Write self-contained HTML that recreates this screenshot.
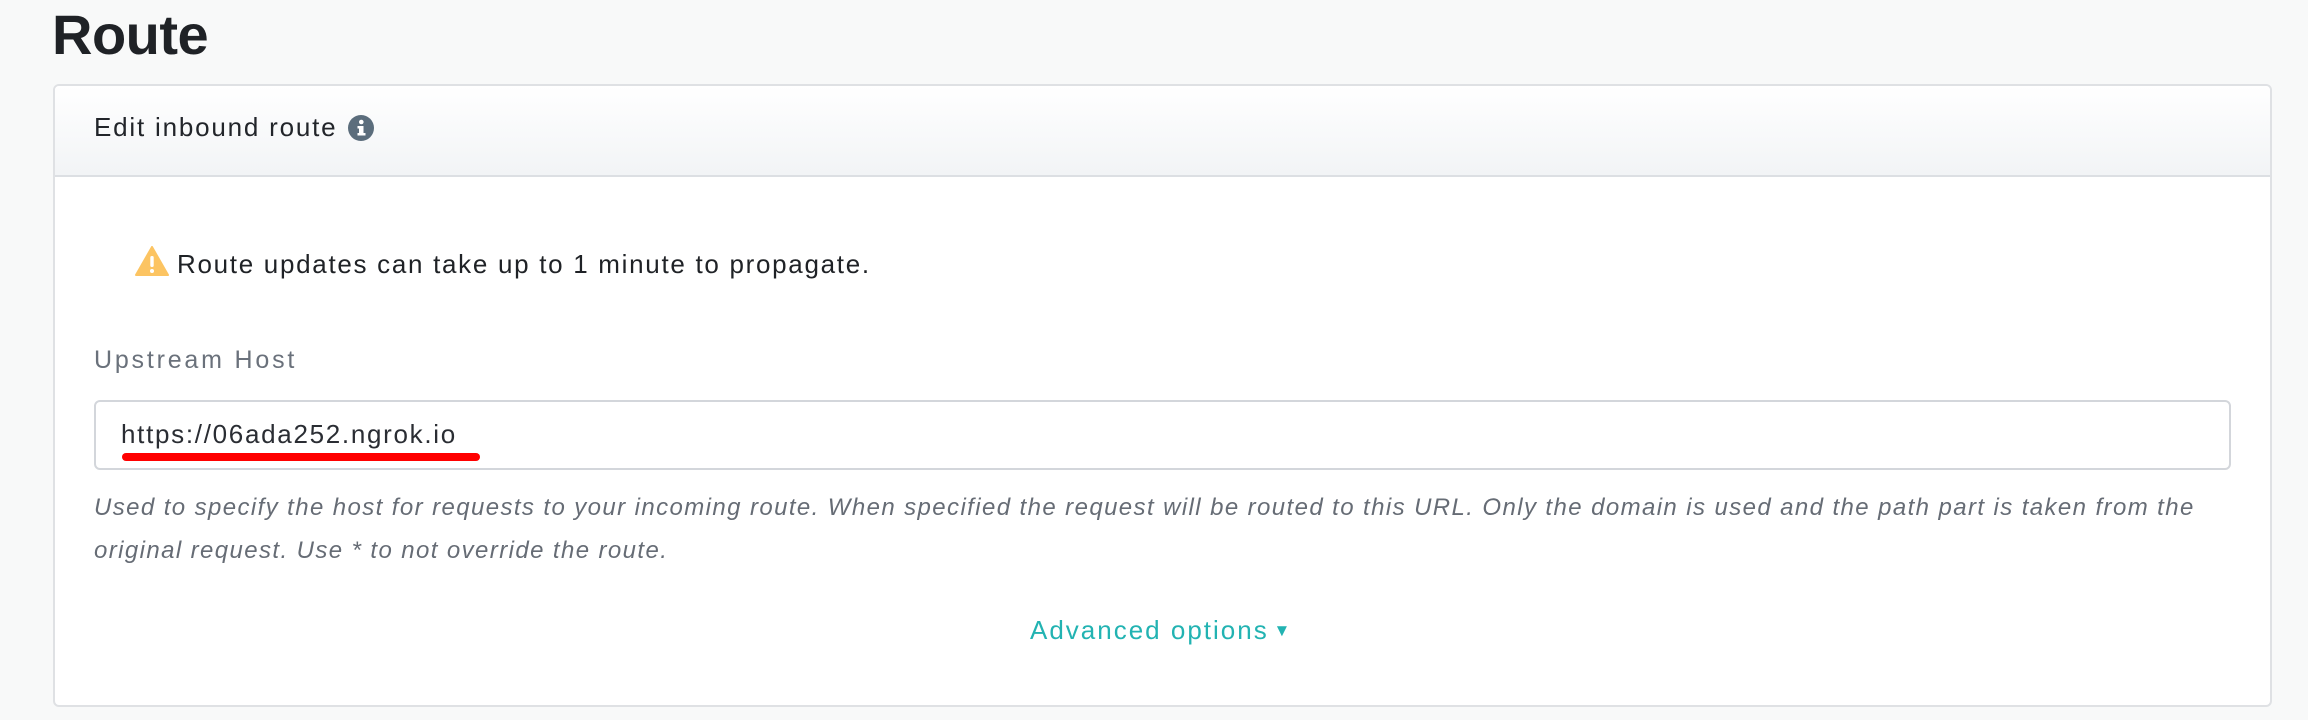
<!DOCTYPE html>
<html><head><meta charset="utf-8"><style>
html,body{margin:0;padding:0;}
body{width:2308px;height:720px;background:#f8f9f9;font-family:"Liberation Sans",sans-serif;position:relative;overflow:hidden;color:#22252a;}
.t{position:absolute;white-space:nowrap;}
h1{position:absolute;left:52px;top:2px;margin:0;font-size:56px;font-weight:bold;color:#1f2226;letter-spacing:-0.5px;}
.card{position:absolute;left:53px;top:84px;width:2215px;height:619px;background:#fff;border:2px solid #dfe1e4;border-radius:6px;overflow:hidden;}
.hdr{position:absolute;left:0;top:0;right:0;height:89px;background:linear-gradient(#fff,#f2f4f6);border-bottom:2px solid #dcdfe3;}
.input{position:absolute;left:94px;top:400px;width:2133px;height:66px;border:2px solid #d3d6db;border-radius:6px;background:#fff;}
</style></head><body>
<h1>Route</h1>
<div class="card">
 <div class="hdr"></div>
</div>
<div class="t" style="left:94px;top:112px;font-size:26px;letter-spacing:1.8px;color:#22252a;">Edit inbound route</div>
<svg style="position:absolute;left:347px;top:114px" width="28" height="28" viewBox="0 0 28 28"><circle cx="14" cy="14" r="13" fill="#5b6d7c"/><rect x="12" y="12" width="4.5" height="9" fill="#fff"/><rect x="10.5" y="12" width="5" height="2.5" fill="#fff"/><rect x="10.5" y="19" width="8" height="2.5" fill="#fff"/><circle cx="14.3" cy="8" r="2.3" fill="#fff"/></svg>
<svg style="position:absolute;left:135px;top:246px" width="34" height="30" viewBox="0 0 34 30"><path d="M17 1 L33 29 L1 29 Z" fill="#fcc462" stroke="#fcc462" stroke-width="2" stroke-linejoin="round"/><rect x="15.3" y="10" width="3.4" height="11" rx="1.5" fill="#fff"/><circle cx="17" cy="25" r="2" fill="#fff"/></svg>
<div class="t" style="left:177px;top:249px;font-size:26px;letter-spacing:1.7px;color:#1f2226;">Route updates can take up to 1 minute to propagate.</div>
<div class="t" style="left:94px;top:346px;font-size:25px;letter-spacing:2.8px;color:#6a717b;">Upstream Host</div>
<div class="input"></div>
<div class="t" style="left:121px;top:419px;font-size:26px;letter-spacing:1.7px;color:#2a2d33;">https://06ada252.ngrok.io</div>
<div style="position:absolute;left:122px;top:453px;width:358px;height:8px;border-radius:4px;background:#f00;"></div>
<div class="t" style="left:94px;top:486px;font-size:24px;letter-spacing:1.4px;font-style:italic;color:#666c75;line-height:43px;">Used to specify the host for requests to your incoming route. When specified the request will be routed to this URL. Only the domain is used and the path part is taken from the<br>original request. Use * to not override the route.</div>
<div class="t" style="left:1030px;top:615px;font-size:26px;letter-spacing:2px;color:#22b3b2;">Advanced options<span style="font-size:17px;position:relative;top:-3px;letter-spacing:0;"> &#9660;</span></div>
</body></html>
